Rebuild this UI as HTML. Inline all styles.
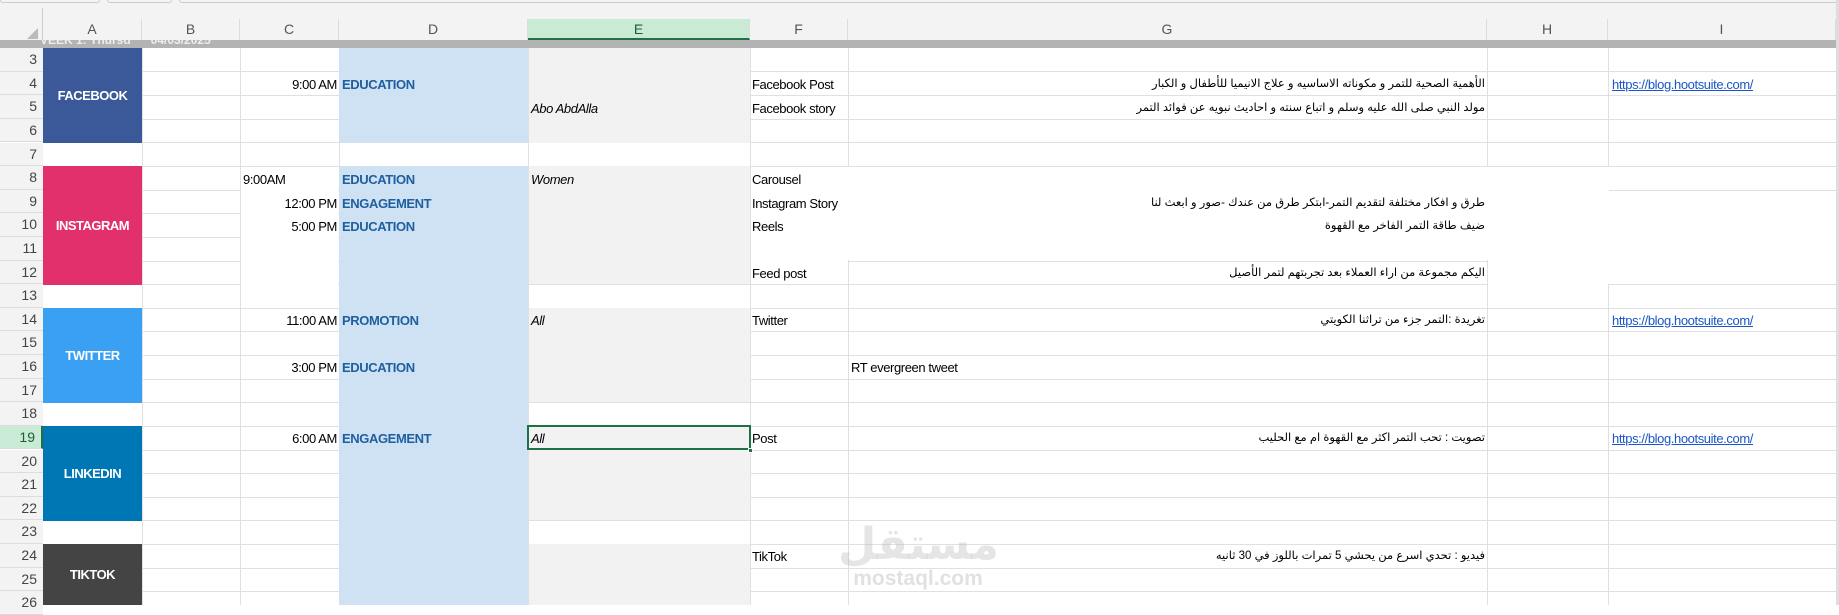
<!DOCTYPE html>
<html><head><meta charset="utf-8"><style>
*{margin:0;padding:0;box-sizing:border-box}
body{width:1839px;height:605px;overflow:hidden;background:#fff;position:relative;font-family:"Liberation Sans",sans-serif;font-size:13px;color:#000}
.a{position:absolute}
.t{position:absolute;white-space:nowrap;line-height:23.6px;height:23.6px;letter-spacing:-0.4px}
.hl{position:absolute;left:43px;width:1796px;height:1px;background:#e0e0e0}
.vl{position:absolute;top:40px;height:565px;width:1px;background:#e0e0e0}
.rh{position:absolute;left:0;width:43px;text-align:right;padding-right:6px;color:#444;font-size:14px;line-height:23.6px;height:23.6px;background:#f3f3f3;border-bottom:1px solid #dcdcdc}
.ch{position:absolute;top:19px;height:21px;line-height:21px;text-align:center;color:#555;font-size:14px;border-right:1px solid #dcdcdc}
.blk{position:absolute;color:#fff;font-weight:bold;text-align:center;font-size:13px;letter-spacing:-0.5px}
.d{color:#1f5fa0;font-weight:bold}
.ar{font-family:"Liberation Sans","DejaVu Sans",sans-serif;font-size:11.5px;direction:rtl;text-align:right}
</style></head><body>
<div class="a" style="left:0;top:0;width:1839px;height:40px;background:#f3f3f3"></div>
<div class="a" style="left:0;top:0;width:100px;height:3px;border:1px solid #ccc;border-top:none;border-radius:0 0 4px 4px"></div>
<div class="a" style="left:107px;top:0;width:65px;height:3px;border:1px solid #ccc;border-top:none;border-radius:0 0 4px 4px"></div>
<div class="a" style="left:179px;top:0;width:1660px;height:3px;border:1px solid #ccc;border-top:none;border-radius:0 0 0 4px"></div>
<div class="a" style="left:42px;top:8px;width:1px;height:32px;background:#ccc"></div>
<div class="a" style="left:27px;top:28px;width:0;height:0;border-left:11px solid transparent;border-bottom:11px solid #bbb"></div>
<div class="ch" style="left:43px;width:99px">A</div>
<div class="ch" style="left:142px;width:98px">B</div>
<div class="ch" style="left:240px;width:99px">C</div>
<div class="ch" style="left:339px;width:189px">D</div>
<div class="ch" style="left:528px;width:222px;background:#c9ead5;border-bottom:2px solid #1e7145;color:#1e5c3a">E</div>
<div class="ch" style="left:750px;width:98px">F</div>
<div class="ch" style="left:848px;width:639px">G</div>
<div class="ch" style="left:1487px;width:121px">H</div>
<div class="ch" style="left:1608px;width:228px">I</div>
<div class="hl" style="top:71px"></div><div class="hl" style="top:95px"></div><div class="hl" style="top:119px"></div><div class="hl" style="top:142px"></div><div class="hl" style="top:166px"></div><div class="hl" style="top:190px"></div><div class="hl" style="top:213px"></div><div class="hl" style="top:237px"></div><div class="hl" style="top:261px"></div><div class="hl" style="top:284px"></div><div class="hl" style="top:308px"></div><div class="hl" style="top:331px"></div><div class="hl" style="top:355px"></div><div class="hl" style="top:379px"></div><div class="hl" style="top:402px"></div><div class="hl" style="top:426px"></div><div class="hl" style="top:450px"></div><div class="hl" style="top:473px"></div><div class="hl" style="top:497px"></div><div class="hl" style="top:520px"></div><div class="hl" style="top:544px"></div><div class="hl" style="top:568px"></div><div class="hl" style="top:591px"></div>
<div class="vl" style="left:142px"></div><div class="vl" style="left:240px"></div><div class="vl" style="left:339px"></div><div class="vl" style="left:528px"></div><div class="vl" style="left:750px"></div><div class="vl" style="left:848px"></div><div class="vl" style="left:1487px"></div><div class="vl" style="left:1608px"></div>
<!-- white masks instagram area -->
<div class="a" style="left:241px;top:167px;width:97px;height:140px;background:#fff"></div>
<div class="a" style="left:751px;top:167px;width:856px;height:93px;background:#fff"></div>
<div class="a" style="left:1488px;top:167px;width:348px;height:117px;background:#fff"></div>
<div class="a" style="left:1488px;top:284px;width:120px;height:23px;background:#fff"></div>
<div class="a" style="left:751px;top:261px;width:97px;height:23px;background:#fff"></div>
<div class="a" style="left:1609px;top:190px;width:227px;height:1px;background:#e0e0e0"></div>
<div class="a" style="left:0;top:40px;width:1836px;height:8px;background:#b3b3b3;overflow:hidden"><div style="position:absolute;left:40px;top:-7px;color:#eee;font-weight:bold;font-size:12px">VEEK 1: Thursd &nbsp;&nbsp;&nbsp;&nbsp;&nbsp;04/03/2025</div></div>
<div class="a" style="left:1836px;top:0;width:3px;height:605px;background:#ddd"></div>
<div class="rh" style="top:48px">3</div><div class="rh" style="top:71.6px">4</div><div class="rh" style="top:95.2px">5</div><div class="rh" style="top:118.9px">6</div><div class="rh" style="top:142.5px">7</div><div class="rh" style="top:166.1px">8</div><div class="rh" style="top:189.7px">9</div><div class="rh" style="top:213.3px">10</div><div class="rh" style="top:237px">11</div><div class="rh" style="top:260.6px">12</div><div class="rh" style="top:284.2px">13</div><div class="rh" style="top:307.8px">14</div><div class="rh" style="top:331.4px">15</div><div class="rh" style="top:355.1px">16</div><div class="rh" style="top:378.7px">17</div><div class="rh" style="top:402.3px">18</div><div class="rh" style="top:425.9px;background:#c9ead5;color:#1e5c3a;border-right:2px solid #1e7145">19</div><div class="rh" style="top:449.5px">20</div><div class="rh" style="top:473.2px">21</div><div class="rh" style="top:496.8px">22</div><div class="rh" style="top:520.4px">23</div><div class="rh" style="top:544px">24</div><div class="rh" style="top:567.6px">25</div><div class="rh" style="top:591.3px">26</div>
<div class="a" style="left:339px;top:48px;width:189px;height:95px;background:#cfe2f3"></div>
<div class="a" style="left:339px;top:166px;width:189px;height:439px;background:#cfe2f3"></div>
<div class="a" style="left:529px;top:48px;width:221px;height:95px;background:#f2f2f2"></div>
<div class="a" style="left:529px;top:166px;width:221px;height:118px;background:#f2f2f2"></div>
<div class="a" style="left:529px;top:308px;width:221px;height:94px;background:#f2f2f2"></div>
<div class="a" style="left:529px;top:426px;width:221px;height:94px;background:#f2f2f2"></div>
<div class="a" style="left:529px;top:544px;width:221px;height:61px;background:#f2f2f2"></div>
<div class="blk" style="left:43px;top:48px;width:99px;height:95px;line-height:95px;background:#3b5998">FACEBOOK</div>
<div class="blk" style="left:43px;top:166px;width:99px;height:119px;line-height:119px;background:#e1306c">INSTAGRAM</div>
<div class="blk" style="left:43px;top:308px;width:99px;height:95px;line-height:95px;background:#3aa0f3">TWITTER</div>
<div class="blk" style="left:43px;top:426px;width:99px;height:95px;line-height:95px;background:#0077b5">LINKEDIN</div>
<div class="blk" style="left:43px;top:544px;width:99px;height:61px;line-height:61px;background:#444">TIKTOK</div>
<div class="t" style="left:240px;width:97px;text-align:right;top:73px">9:00 AM</div>
<div class="t" style="left:243px;top:168px">9:00AM</div>
<div class="t" style="left:240px;width:97px;text-align:right;top:192px">12:00 PM</div>
<div class="t" style="left:240px;width:97px;text-align:right;top:215px">5:00 PM</div>
<div class="t" style="left:240px;width:97px;text-align:right;top:309px">11:00 AM</div>
<div class="t" style="left:240px;width:97px;text-align:right;top:356px">3:00 PM</div>
<div class="t" style="left:240px;width:97px;text-align:right;top:427px">6:00 AM</div>
<div class="t d" style="left:342px;top:73px">EDUCATION</div>
<div class="t d" style="left:342px;top:168px">EDUCATION</div>
<div class="t d" style="left:342px;top:192px">ENGAGEMENT</div>
<div class="t d" style="left:342px;top:215px">EDUCATION</div>
<div class="t d" style="left:342px;top:309px">PROMOTION</div>
<div class="t d" style="left:342px;top:356px">EDUCATION</div>
<div class="t d" style="left:342px;top:427px">ENGAGEMENT</div>
<div class="t" style="left:531px;top:97px;font-style:italic">Abo AbdAlla</div>
<div class="t" style="left:531px;top:168px;font-style:italic">Women</div>
<div class="t" style="left:531px;top:309px;font-style:italic">All</div>
<div class="a" style="left:527px;top:425px;width:224px;height:25px;border:2px solid #1e7145"></div>
<div class="a" style="left:748px;top:448px;width:5px;height:5px;background:#1e7145;border:1px solid #fff"></div>
<div class="t" style="left:531px;top:427px;font-style:italic">All</div>
<div class="t" style="left:752px;top:73px">Facebook Post</div>
<div class="t" style="left:752px;top:97px">Facebook story</div>
<div class="t" style="left:752px;top:168px">Carousel</div>
<div class="t" style="left:752px;top:192px;width:96px;overflow:hidden">Instagram Story</div>
<div class="t" style="left:752px;top:215px">Reels</div>
<div class="t" style="left:752px;top:262px">Feed post</div>
<div class="t" style="left:752px;top:309px">Twitter</div>
<div class="t" style="left:752px;top:427px">Post</div>
<div class="t" style="left:752px;top:545px">TikTok</div>
<div class="t" style="left:851px;top:356px">RT evergreen tweet</div>
<div class="t ar" style="left:850px;width:635px;top:73px">الأهمية الصحية للتمر و مكوناته الاساسيه و علاج الانيميا للأطفال و الكبار</div>
<div class="t ar" style="left:850px;width:635px;top:97px">مولد النبي صلى الله عليه وسلم و اتباع سنته  و احاديث نبويه عن فوائد التمر</div>
<div class="t ar" style="left:850px;width:635px;top:192px">طرق و افكار مختلفة لتقديم التمر-ابتكر طرق من عندك -صور و ابعث لنا</div>
<div class="t ar" style="left:850px;width:635px;top:215px">ضيف طاقة التمر الفاخر مع القهوة</div>
<div class="t ar" style="left:850px;width:635px;top:262px">اليكم مجموعة من اراء العملاء بعد تجربتهم لتمر الأصيل</div>
<div class="t ar" style="left:850px;width:635px;top:309px">تغريدة :التمر جزء من تراثنا الكويتي</div>
<div class="t ar" style="left:850px;width:635px;top:427px">تصويت : تحب التمر اكثر مع القهوة ام مع الحليب</div>
<div class="t ar" style="left:850px;width:635px;top:545px">فيديو : تحدي اسرع من يحشي 5 تمرات باللوز في 30 ثانيه</div>
<div class="t" style="left:1612px;top:73px;color:#1a56c9;text-decoration:underline">https://blog.hootsuite.com/</div>
<div class="t" style="left:1612px;top:309px;color:#1a56c9;text-decoration:underline">https://blog.hootsuite.com/</div>
<div class="t" style="left:1612px;top:427px;color:#1a56c9;text-decoration:underline">https://blog.hootsuite.com/</div>
<div class="a" style="left:838px;top:520px;width:160px;text-align:center;font-family:'DejaVu Sans',sans-serif;font-weight:bold;font-size:44px;color:rgba(180,180,180,0.35);line-height:50px">مستقل</div>
<div class="a" style="left:838px;top:566px;width:160px;text-align:center;font-weight:bold;font-size:21px;color:rgba(180,180,180,0.4);line-height:26px">mostaql.com</div>
</body></html>
